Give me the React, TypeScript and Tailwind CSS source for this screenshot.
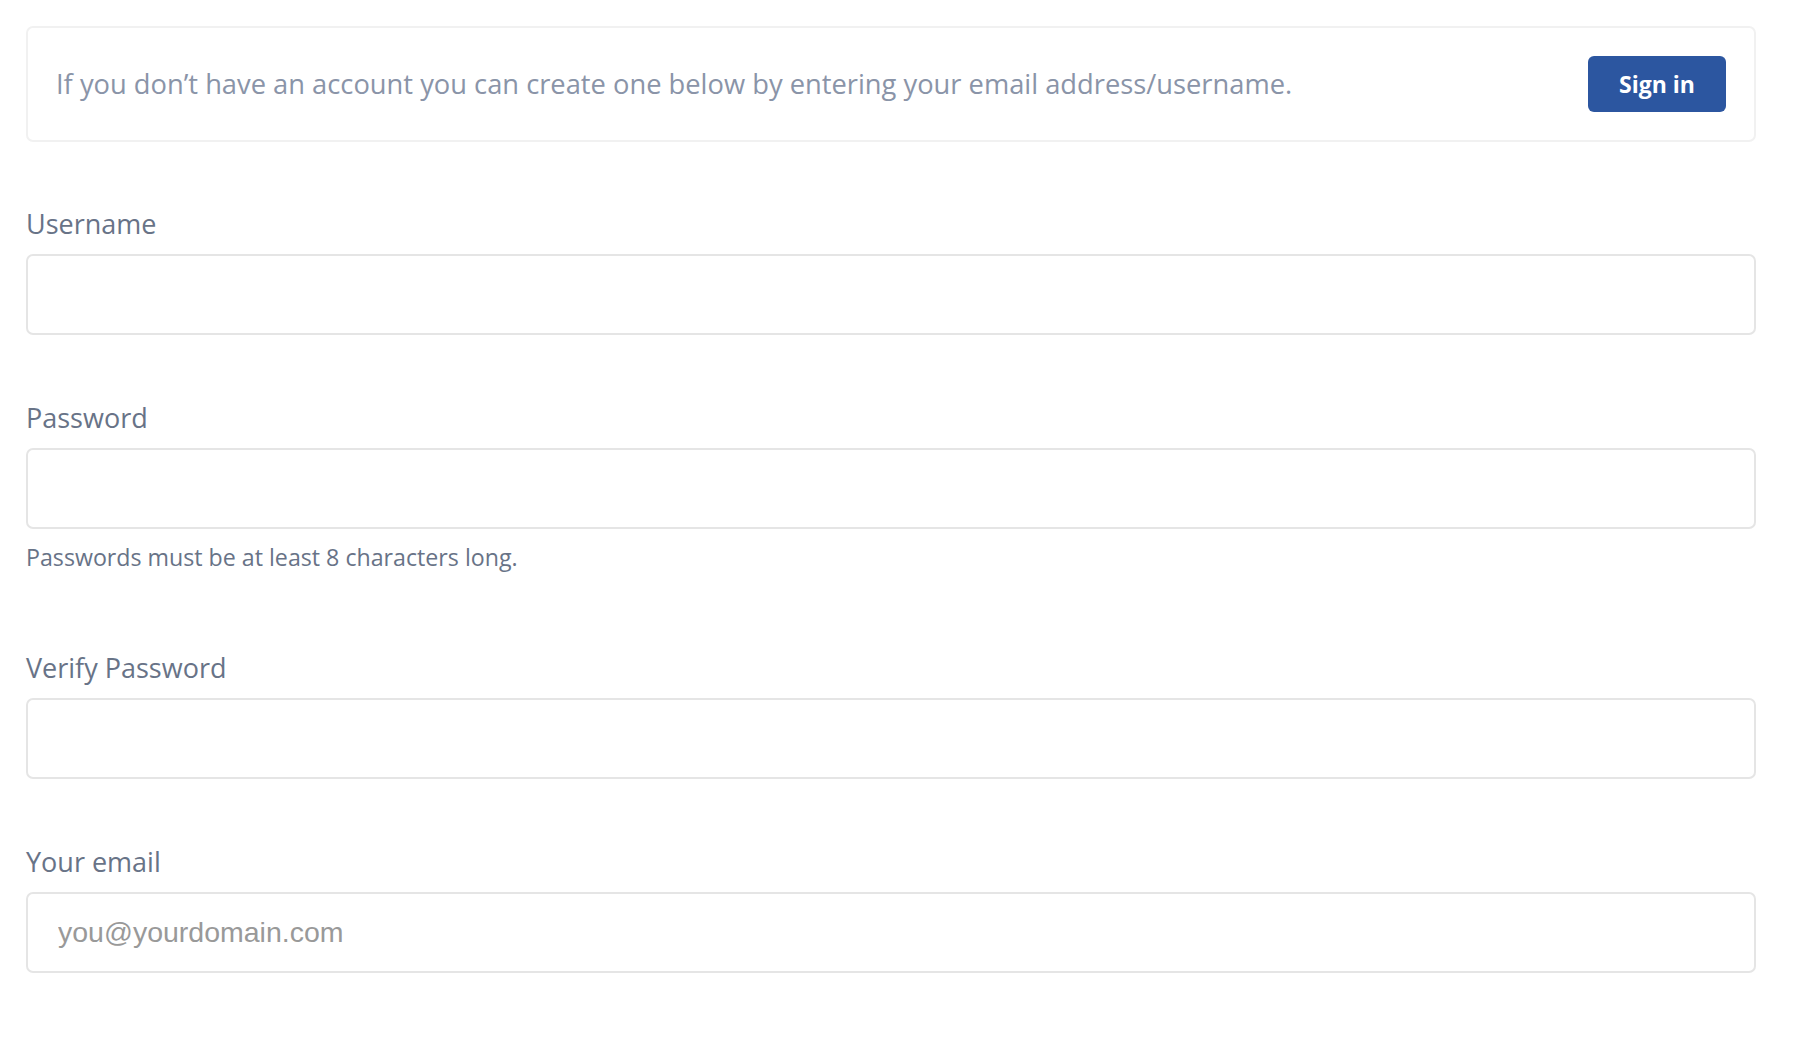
import React from 'react';

const labelCls = 'block text-[27px] leading-[36px] text-[#687387] mb-[12px]';
const inputCls =
  'block w-full h-[81px] rounded-[7px] border-2 border-[#e5e5e5] bg-white px-[30px] text-[28.5px] text-[#555] outline-none placeholder:text-[#999999]';

const Field: React.FC<{ label: string; type?: string; placeholder?: string; hint?: string }> = ({
  label,
  type = 'text',
  placeholder,
  hint,
}) => (
  <div>
    <label className={labelCls}>{label}</label>
    <input
      type={type}
      placeholder={placeholder}
      className={inputCls}
      style={{ fontFamily: '"Liberation Sans", Arial, sans-serif' }}
    />
    {hint && <p className="mt-[12px] text-[23.2px] leading-[32px] text-[#687387]">{hint}</p>}
  </div>
);

const App: React.FC = () => {
  return (
    <div
      className="min-h-screen bg-white pt-[26px] pl-[26px]"
      style={{ fontFamily: '"Open Sans", "Noto Sans", sans-serif' }}
    >
      <div className="w-[1730px]">
        {/* Notice box */}
        <div className="flex items-center justify-between rounded-[7px] border-2 border-[#f1f1f1] px-[28px] py-[28px]">
          <p className="text-[27.3px] leading-[36px] text-[#8a94a8]">
            If you don’t have an account you can create one below by entering your email address/username.
          </p>
          <button className="h-[56px] w-[138px] rounded-[6px] bg-[#2c56a0] text-[23px] font-bold text-white">
            Sign in
          </button>
        </div>

        {/* Form */}
        <form className="mt-[64px] flex flex-col">
          <Field label="Username" />
          <div className="mt-[65px]">
            <Field label="Password" type="password" hint="Passwords must be at least 8 characters long." />
          </div>
          <div className="mt-[77px]">
            <Field label="Verify Password" type="password" />
          </div>
          <div className="mt-[65px]">
            <Field label="Your email" type="email" placeholder="you@yourdomain.com" />
          </div>
        </form>
      </div>
    </div>
  );
};

export default App;
